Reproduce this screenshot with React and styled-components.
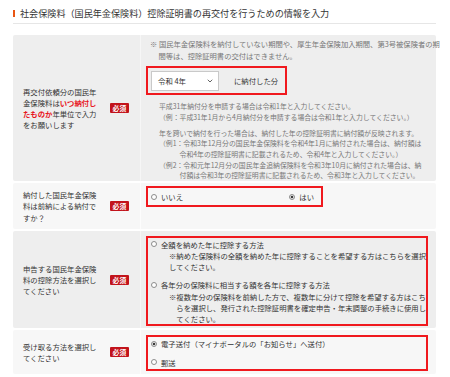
import React from 'react';
import styled, { createGlobalStyle } from 'styled-components';
import { ChevronDown } from 'lucide-react';

const GlobalStyle = createGlobalStyle`
  body {
    margin: 0;
    background: #fff;
    font-family: "Noto Sans CJK JP", "Noto Sans", sans-serif;
    color: #333;
  }
`;

const Page = styled.div`
  width: 423px;
  padding-left: 13px;
`;

const Title = styled.h2`
  display: flex;
  align-items: center;
  margin: 0;
  padding: 8px 0 5px;
  font-size: 9.1px;
  font-weight: normal;
  line-height: 10px;
  color: #333;
  border-bottom: 1px solid #e6e6e6;

  &::before {
    content: '';
    width: 2px;
    height: 7px;
    margin-right: 5px;
    background: #e95513;
  }
`;

const Table = styled.div`
  display: grid;
  gap: 2px;
  margin-top: 11px;
`;

const Row = styled.div`
  display: grid;
  grid-template-columns: 127px 1fr;
  background: ${({ $alt }) => ($alt ? '#f7f7f7' : '#eeeeee')};
  border-radius: 2px;
`;

const LabelCell = styled.div`
  display: flex;
  align-items: center;
  padding: 6px 0 6px 10px;
`;

const LabelText = styled.div`
  width: 76px;
  font-size: 7.35px;
  line-height: 11.2px;
  color: #333;
  white-space: nowrap;
`;

const Strong = styled.span`
  color: #e8141c;
  font-weight: bold;
`;

const Badge = styled.span`
  margin-left: 11px;
  padding: 0 2.6px;
  height: 10px;
  line-height: 10px;
  font-size: 6.8px;
  font-weight: bold;
  color: #fff;
  background: #c2131b;
  border-radius: 1px;
  white-space: nowrap;
`;

const ValueCell = styled.div`
  border-left: 1px solid ${({ $alt }) => ($alt ? '#fdfdfd' : '#f6f6f6')};
  padding: ${({ $pad }) => $pad};
  min-width: 0;
`;

const TopNote = styled.div`
  margin-left: 4px;
  padding-left: 8.5px;
  text-indent: -8.5px;
  font-size: 7.3px;
  line-height: 11.8px;
  color: #777;
  white-space: nowrap;
`;

const RedBox = styled.div`
  display: ${({ $inline }) => ($inline ? 'inline-flex' : 'flex')};
  flex-direction: ${({ $column }) => ($column ? 'column' : 'row')};
  align-items: ${({ $column }) => ($column ? 'stretch' : 'center')};
  justify-content: ${({ $spread }) => ($spread ? 'space-between' : 'flex-start')};
  width: ${({ $width }) => $width || 'auto'};
  box-sizing: border-box;
  margin-top: ${({ $mt }) => $mt || '0'};
  padding: ${({ $pad }) => $pad};
  border: 2px solid #f0191e;
`;

const Select = styled.div`
  display: flex;
  align-items: center;
  justify-content: space-between;
  box-sizing: border-box;
  width: 68px;
  height: 20px;
  padding: 0 4px 0 6px;
  background: #fff;
  border: 1px solid #c9c9c9;
  font-size: 7.4px;
  color: #333;

  svg {
    color: #444;
  }
`;

const Suffix = styled.span`
  margin-left: 15px;
  font-size: 7.35px;
  color: #333;
`;

const Para = styled.div`
  margin: ${({ $mt }) => $mt} 0 0 13px;
  font-size: 6.85px;
  line-height: 10.7px;
  color: #777;
  white-space: nowrap;
`;

const Example = styled.div`
  padding-left: 3em;
  text-indent: -3em;
`;

const Option = styled.label`
  display: flex;
  align-items: center;
  gap: 4px;
  margin-top: ${({ $mt }) => $mt || '0'};
  font-size: 7.35px;
  line-height: 9px;
  color: #333;
  white-space: nowrap;
`;

const Radio = styled.span`
  flex: none;
  width: 6px;
  height: 6px;
  box-sizing: border-box;
  border-radius: 50%;
  border: 1px solid #8c8c8c;
  background: ${({ $checked }) =>
    $checked ? 'radial-gradient(circle, #3a3a3a 0 1.3px, #e6e6e6 1.6px)' : '#fff'};
`;

const OptionNote = styled.div`
  margin: 2.6px 0 0 18px;
  padding-left: ${({ $hang }) => ($hang ? '1em' : '0')};
  text-indent: ${({ $hang }) => ($hang ? '-1em' : '0')};
  font-size: 7.35px;
  line-height: 10.8px;
  color: #333;
  white-space: nowrap;
`;

const Required = () => <Badge>必須</Badge>;

const App = () => (
  <>
    <GlobalStyle />
    <Page>
      <Title>社会保険料（国民年金保険料）控除証明書の再交付を行うための情報を入力</Title>
      <Table>
        <Row>
          <LabelCell>
            <LabelText>
              再交付依頼分の国民年
              <br />
              金保険料は<Strong>いつ納付し</Strong>
              <br />
              <Strong>たものか</Strong>年単位で入力
              <br />
              をお願いします
            </LabelText>
            <Required />
          </LabelCell>
          <ValueCell $pad="4px 6px 0 5px">
            <TopNote>
              ※ 国民年金保険料を納付していない期間や、厚生年金保険加入期間、第3号被保険者の期
              <br />
              間等は、控除証明書の交付はできません。
            </TopNote>
            <RedBox $inline $mt="3.4px" $pad="3px 7px 2px 3px">
              <Select>
                <span>令和 4年</span>
                <ChevronDown size={8} strokeWidth={2.5} />
              </Select>
              <Suffix>に納付した分</Suffix>
            </RedBox>
            <Para $mt="6px">
              <div>平成31年納付分を申請する場合は令和1年と入力してください。</div>
              <div>（例：平成31年1月から4月納付分を申請する場合は令和1年と入力してください。）</div>
            </Para>
            <Para $mt="5.2px">
              <div>年を跨いで納付を行った場合は、納付した年の控除証明書に納付額が反映されます。</div>
              <Example>
                （例1：令和3年12月分の国民年金保険料を令和4年1月に納付された場合は、納付額は
                <br />
                令和4年の控除証明書に記載されるため、令和4年と入力してください。）
              </Example>
              <Example>
                （例2：令和元年12月分の国民年金追納保険料を令和3年10月に納付された場合は、納
                <br />
                付額は令和3年の控除証明書に記載されるため、令和3年と入力してください。
              </Example>
            </Para>
          </ValueCell>
        </Row>

        <Row $alt>
          <LabelCell>
            <LabelText>
              納付した国民年金保険
              <br />
              料は前納による納付で
              <br />
              すか？
            </LabelText>
            <Required />
          </LabelCell>
          <ValueCell $alt $pad="3px 6px 0 5px">
            <RedBox $spread $width="177px" $pad="4px 7px 4px 3px">
              <Option>
                <Radio />
                いいえ
              </Option>
              <Option>
                <Radio $checked />
                はい
              </Option>
            </RedBox>
          </ValueCell>
        </Row>

        <Row>
          <LabelCell>
            <LabelText>
              申告する国民年金保険
              <br />
              料の控除方法を選択し
              <br />
              てください
            </LabelText>
            <Required />
          </LabelCell>
          <ValueCell $pad="5px 8px 2px 5px">
            <RedBox $column $pad="2px 2px 0 3px">
              <Option>
                <Radio />
                全額を納めた年に控除する方法
              </Option>
              <OptionNote>
                ※納めた保険料の全額を納めた年に控除することを希望する方はこちらを選択
                <br />
                してください。
              </OptionNote>
              <Option $mt="7.6px">
                <Radio />
                各年分の保険料に相当する額を各年に控除する方法
              </Option>
              <OptionNote $hang>
                ※複数年分の保険料を前納した方で、複数年に分けて控除を希望する方はこち
                <br />
                らを選択し、発行された控除証明書を確定申告・年末調整の手続きに使用し
                <br />
                てください。
              </OptionNote>
            </RedBox>
          </ValueCell>
        </Row>

        <Row $alt>
          <LabelCell>
            <LabelText>
              受け取る方法を選択し
              <br />
              てください
            </LabelText>
            <Required />
          </LabelCell>
          <ValueCell $alt $pad="5px 8px 3px 5px">
            <RedBox $column $pad="2px 3px">
              <Option>
                <Radio $checked />
                電子送付（マイナポータルの「お知らせ」へ送付）
              </Option>
              <Option $mt="9.3px">
                <Radio />
                郵送
              </Option>
            </RedBox>
          </ValueCell>
        </Row>
      </Table>
    </Page>
  </>
);

export default App;
